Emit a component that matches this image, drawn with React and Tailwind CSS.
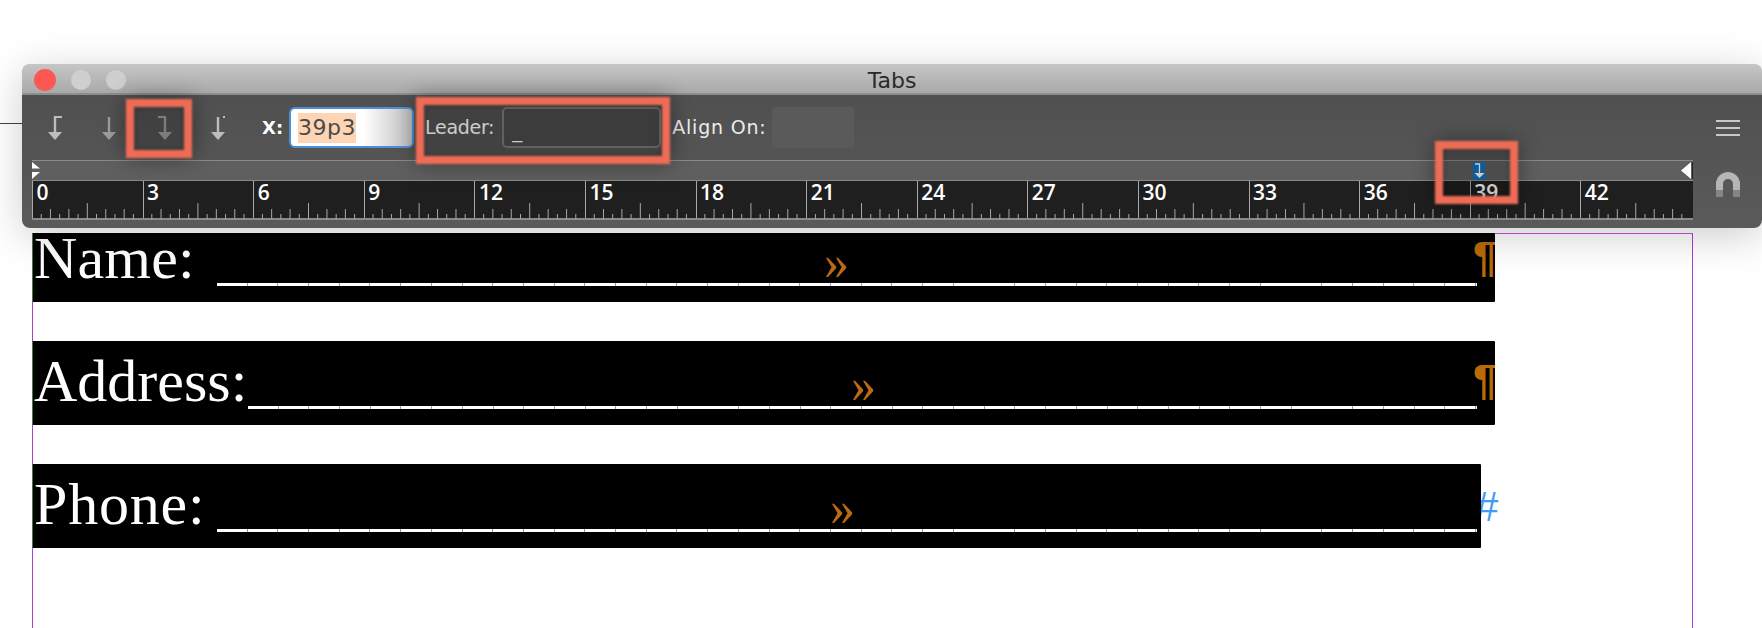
import React from 'react';

const rulerMarks = [0, 3, 6, 9, 12, 15, 18, 21, 24, 27, 30, 33, 36, 39, 42];
const sans = 'font-["DejaVu_Sans",sans-serif]';

const ArrowIcon = ({ flag, dim = false }) => (
  <svg width="20" height="30" viewBox="0 0 20 30" className={dim ? 'text-[#9d9d9d]' : 'text-[#bdbdbd]'}>
    <path d="M10 22V4" stroke="currentColor" strokeWidth="2.4" fill="none" />
    <path d="M3 19h14l-7 8z" fill="currentColor" />
    {flag === 'left' && <rect x="9" y="3" width="8" height="2" fill="currentColor" />}
    {flag === 'right' && <rect x="3" y="3" width="8" height="2" fill="currentColor" />}
    {flag === 'dot' && <rect x="15" y="3" width="2" height="2" fill="currentColor" />}
  </svg>
);

const RulerTicks = () => {
  const ticks = [];
  for (let i = 0; i <= 180; i++) {
    if (i % 12 === 0) continue;
    const h = i % 6 === 0 ? 16 : i % 2 === 0 ? 10 : 5;
    const x = i * 9.217;
    ticks.push(<line key={i} x1={x} x2={x} y1={38 - h} y2={38} stroke="#a8a8a8" strokeWidth="1" />);
  }
  return (
    <svg width="1661" height="38" className="absolute left-0 top-0">
      {ticks}
    </svg>
  );
};

const RedBox = ({ className }) => (
  <div className={`absolute border-8 border-[#ee6c55] bg-black/20 blur-[1px] shadow-[0_0_22px_rgba(0,0,0,0.4),inset_0_0_6px_rgba(0,0,0,0.3)] ${className}`} />
);

function TabsPanel() {
  return (
    <div className={`absolute left-[22px] top-[64px] w-[1740px] h-[164px] rounded-t-[7px] rounded-b-[8px] overflow-hidden shadow-[0_8px_40px_rgba(0,0,0,0.2)] ${sans}`}>
      <div className="relative h-[31px] flex items-center justify-center border-b-2 border-[#8d8d8d] bg-gradient-to-b from-[#c6c6c6] to-[#a9a9a9] pt-[3px] text-[22px] text-[#2a2a2a]">
        <div className="absolute left-[12px] top-[5px] flex items-center gap-[15px]">
          <div className="w-[22px] h-[22px] rounded-full bg-[#fc5753]" />
          <div className="w-[20px] h-[20px] rounded-full bg-[#cfcfcf]" />
          <div className="w-[20px] h-[20px] rounded-full bg-[#cfcfcf]" />
        </div>
        Tabs
      </div>

      <div className="relative h-[133px] bg-gradient-to-b from-[#505050] to-[#5a5a5a]">
        <div className="h-[65px] flex items-center pl-[23px]">
          <div className="flex items-center gap-[33px] w-[217px]">
            <ArrowIcon flag="left" />
            <div className="ml-[1px]"><ArrowIcon dim /></div>
            <div className="ml-[3px]"><ArrowIcon flag="right" dim /></div>
            <ArrowIcon flag="dot" />
          </div>
          <span className="text-[18px] font-bold text-white">X:</span>
          <div className="ml-[6px] w-[125px] h-[41px] rounded-[6px] border-2 border-[#4a90d9] bg-gradient-to-r from-white from-60% to-[#bdbdbd] flex items-center pl-[7px]">
            <span className="bg-[#fdd5b5] text-[22px] leading-[30px] tracking-[0.5px] text-[#4a4a4a]">39p3</span>
          </div>
          <span className="ml-[11px] text-[19px] tracking-[-0.3px] text-white">Leader:</span>
          <div className="ml-[8px] w-[159px] h-[41px] rounded-[5px] border-2 border-[#7a7a7a] bg-[#4b4b4b] flex items-end pl-[8px] text-[20px] leading-[30px] text-white">_</div>
          <span className="ml-[11px] text-[19px] tracking-[0.8px] text-[#ececec]">Align On:</span>
          <div className="ml-[5px] w-[82px] h-[41px] rounded-[4px] bg-[#5a5a5a]" />
          <div className="ml-auto mr-[22px] flex flex-col gap-[5px]">
            <div className="w-[24px] h-[2px] bg-[#c8c8c8]" />
            <div className="w-[24px] h-[2px] bg-[#c8c8c8]" />
            <div className="w-[24px] h-[2px] bg-[#c8c8c8]" />
          </div>
        </div>

        <div className="flex">
          <div className="relative ml-[10px] w-[1661px]">
            <div className="relative h-[20px] border-t border-[#8a8a8a] bg-[#5f5f5f]">
              <svg width="9" height="17" viewBox="0 0 9 17" className="absolute left-0 top-[1px]">
                <path d="M0 0l8 6.5H0zM0 17l8-7H0z" fill="#fff" />
              </svg>
              <svg width="12" height="17" viewBox="0 0 12 17" className="absolute right-0 top-[1px]">
                <path d="M10 0v17L0 8.5z" fill="#fff" />
                <rect x="11" y="0" width="1" height="17" fill="#222" />
              </svg>
              <div className="absolute left-[1441px] top-[1px] w-[12px] h-[18px] bg-[#1172c4]">
                <svg width="12" height="18" viewBox="0 0 12 18">
                  <path d="M2 2h4.5v9" stroke="#fff" strokeWidth="1.3" fill="none" />
                  <path d="M1.5 11h10l-5 5z" fill="#fff" />
                </svg>
              </div>
            </div>
            <div className='relative h-[40px] flex border-t border-[#8a8a8a] border-b-2 border-b-[#8a8a8a] bg-[#1f1f1f] font-["Open_Sans",sans-serif]'>
              <RulerTicks />
              {rulerMarks.map((n, i) => (
                <div key={n} className={`h-full border-l border-[#a8a8a8] pl-[3.5px] text-[21px] leading-[23px] font-semibold text-white ${i === 14 ? 'w-[81px]' : 'w-[110.6px]'}`}>
                  {n}
                </div>
              ))}
            </div>
          </div>
          <div className="ml-[23px] mt-[12px]">
            <svg width="24" height="25" viewBox="0 0 24 25">
              <path d="M0 25V12a12 12 0 0 1 24 0v13h-7V12a5 5 0 0 0-10 0v13z" fill="#b5b5b5" />
              <path d="M0 18h7v7H0zM17 18h7v7h-7z" fill="#858585" />
            </svg>
          </div>
        </div>
      </div>

      <RedBox className="left-[104px] top-[35px] w-[66px] h-[59px]" />
      <RedBox className="left-[394px] top-[33px] w-[254px] h-[67px]" />
      <RedBox className="left-[1413px] top-[77px] w-[83px] h-[63px]" />
    </div>
  );
}

function FieldRow({ label, labelClass, tabLeft, height, end, width }) {
  return (
    <div className={`relative flex items-end bg-black rounded-[1px] border-l border-[#3f7d3a] overflow-hidden ${height} ${width} font-["Liberation_Serif",serif]`}>
      <span className={`shrink-0 pl-[1px] pb-[14px] text-[60px] leading-[60px] text-white ${labelClass}`}>{label}</span>
      <div className="relative w-full">
        <div className="absolute bottom-[16px] left-0 right-0 h-[3px] bg-[repeating-linear-gradient(90deg,#fff_0,#fff_29.7px,#9a9a9a_29.7px,#9a9a9a_30.7px)]" />
        <span className={`absolute bottom-[10px] text-[50px] leading-[60px] text-[#bc6a16] ${tabLeft}`}>»</span>
      </div>
      {end}
    </div>
  );
}

const Pilcrow = () => (
  <span className='relative shrink-0 -ml-[4px] w-[22px] overflow-hidden pb-[16px] font-["Liberation_Sans",sans-serif] text-[43px] leading-[60px] font-bold text-[#bb6a08]'>¶</span>
);

export default function App() {
  return (
    <div className="relative h-[628px] w-[1762px] overflow-hidden bg-white">
      <div className="absolute left-0 top-[123px] w-[22px] h-px bg-[#444]" />
      <div className="pl-[32px] pt-[233px]">
        <div className="h-[395px] w-[1661px] border-t border-r border-l border-t-[#d14bdd] border-r-[#a93fd6] border-l-[#a93fd6]">
          <div className="-ml-px -mt-px flex flex-col gap-[39px]">
            <FieldRow label="Name:" labelClass="w-[184px] tracking-[0.2px]" tabLeft="left-[607px]" height="h-[69px]" width="w-[1463px]" end={<Pilcrow />} />
            <FieldRow label="Address:" labelClass="w-[215px]" tabLeft="left-[603px]" height="h-[84px]" width="w-[1463px]" end={<Pilcrow />} />
            <div className="flex items-start">
              <FieldRow label="Phone:" labelClass="w-[184px] tracking-[0.8px]" tabLeft="left-[613px]" height="h-[84px]" width="w-[1449px]" end={<div className="shrink-0 w-[4px]" />} />
              <span className='mt-[13px] -ml-[6px] font-["Liberation_Sans",sans-serif] text-[42px] leading-[60px] text-[#3f9bf5]'>#</span>
            </div>
          </div>
        </div>
      </div>
      <TabsPanel />
    </div>
  );
}
